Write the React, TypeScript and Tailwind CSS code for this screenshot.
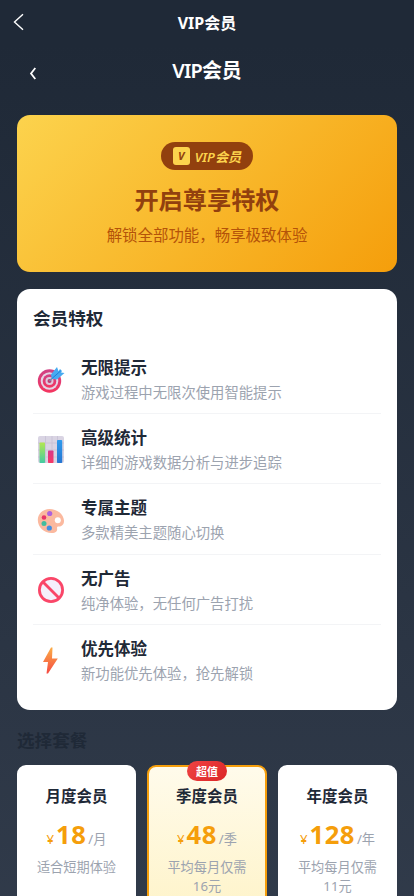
import React from "react";
import clsx from "clsx";

const TargetIcon = () => (
  <svg width="28" height="28" viewBox="0 0 28 28">
    <defs>
      <linearGradient id="ring" x1="0" y1="0" x2="0" y2="1">
        <stop offset="0" stopColor="#cf4286" />
        <stop offset="1" stopColor="#f5355f" />
      </linearGradient>
    </defs>
    <circle cx="12.5" cy="15" r="11.7" fill="url(#ring)" />
    <circle cx="12.5" cy="15" r="8.8" fill="#e5d5e6" />
    <circle cx="12.5" cy="15" r="6.8" fill="url(#ring)" />
    <circle cx="12.5" cy="15" r="4" fill="#ddc9dd" />
    <circle cx="12.5" cy="15" r="2" fill="#c13a70" />
    <path d="M12.5 15L18 9.5" stroke="#7d89a8" strokeWidth="1.6" />
    <path d="M14 8.5L20 1l1.5 4.3L23 3l2 2-1 1.5 3.5.5-7.5 6.5-5.2-.8z" fill="#47aaf0" />
    <path d="M15 12.5L23.5 5" stroke="#1d7fda" strokeWidth="1" />
  </svg>
);

const ChartIcon = () => (
  <svg width="28" height="28" viewBox="0 0 28 28">
    <defs>
      <linearGradient id="green" x1="0" y1="0" x2="0" y2="1">
        <stop offset="0" stopColor="#b3e750" />
        <stop offset="1" stopColor="#43cba3" />
      </linearGradient>
      <linearGradient id="pink" x1="0" y1="0" x2="0" y2="1">
        <stop offset="0" stopColor="#d8368a" />
        <stop offset="1" stopColor="#f83965" />
      </linearGradient>
      <linearGradient id="blue" x1="0" y1="0" x2="0" y2="1">
        <stop offset="0" stopColor="#2f9bed" />
        <stop offset="1" stopColor="#2475d2" />
      </linearGradient>
    </defs>
    <rect x="1" y="0" width="26" height="27" rx="2" fill="#d9d4e3" />
    <path
      d="M1 7h26M1 14h26M1 21h26M8.5 0v27M15 0v27M20.5 0v27"
      stroke="#c6c0d4"
      strokeWidth=".8"
    />
    <rect x="2.5" y="6.5" width="5.5" height="20.5" rx=".8" fill="url(#green)" />
    <rect x="11" y="14.5" width="5.5" height="12.5" rx=".8" fill="url(#pink)" />
    <rect x="20" y="4" width="5.2" height="23" rx=".8" fill="url(#blue)" />
  </svg>
);

const PaletteIcon = () => (
  <svg width="28" height="28" viewBox="0 0 28 28">
    <path
      d="M12.5 3C5.5 3 .8 8 .8 14c0 7 6.2 13 13.8 13 4.3 0 6-2 5.500-4.500-.3-1.700.3-2 2-2 3 0 5.100-2.500 4.900-6C26.600 8 20 3 12.500 3z"
      fill="#fbb99f"
    />
    <circle cx="20.8" cy="14.3" r="3" fill="#fff" />
    <circle cx="12.7" cy="7.5" r="2.6" fill="#ad61dc" />
    <circle cx="7" cy="11.5" r="2.3" fill="#e93467" />
    <circle cx="7" cy="17.5" r="2.5" fill="#41bd9f" />
    <circle cx="12.3" cy="22" r="2.6" fill="#438ee1" />
  </svg>
);

const BanIcon = () => (
  <svg width="28" height="28" viewBox="0 0 28 28">
    <circle cx="14" cy="14" r="11.6" fill="#f5f0fb" stroke="#fa4668" strokeWidth="2.8" />
    <path d="M6 6l16 16" stroke="#fa4668" strokeWidth="2.8" />
  </svg>
);

const BoltIcon = () => (
  <svg width="28" height="28" viewBox="0 0 28 28">
    <defs>
      <linearGradient id="bolt" x1="0" y1="0" x2="0" y2="1">
        <stop offset="0" stopColor="#fbad46" />
        <stop offset="1" stopColor="#f54a43" />
      </linearGradient>
    </defs>
    <path d="M14 .5h1.5L15 11.500h5.800L11 26.500H9.500L11 15H6z" fill="url(#bolt)" />
  </svg>
);

const features = [
  { icon: <TargetIcon />, title: "无限提示", desc: "游戏过程中无限次使用智能提示" },
  { icon: <ChartIcon />, title: "高级统计", desc: "详细的游戏数据分析与进步追踪" },
  { icon: <PaletteIcon />, title: "专属主题", desc: "多款精美主题随心切换" },
  { icon: <BanIcon />, title: "无广告", desc: "纯净体验，无任何广告打扰" },
  { icon: <BoltIcon />, title: "优先体验", desc: "新功能优先体验，抢先解锁" },
];

const plans = [
  { name: "月度会员", price: "18", unit: "/月", desc: "适合短期体验" },
  { name: "季度会员", price: "48", unit: "/季", desc: "平均每月仅需16元", tag: "超值" },
  { name: "年度会员", price: "128", unit: "/年", desc: "平均每月仅需11元" },
];

const App = () => {
  return (
    <div className="h-[896px] overflow-hidden bg-[#1f2937] font-['Noto_Sans','Noto_Sans_CJK_SC',sans-serif] text-[#1f2937]">
      <header className="grid h-11 grid-cols-[1fr_auto_1fr] items-center text-white">
        <svg className="ml-[13px]" width="11" height="18" viewBox="0 0 11 18">
          <path d="M10 1.2L1.5 9l8.5 7.8" fill="none" stroke="white" strokeWidth="1.4" />
        </svg>
        <h1 className="pt-[2px] text-[16px] leading-[22px] font-bold">VIP会员</h1>
      </header>

      <main className="h-[1180px] bg-linear-to-b from-[#1f2937] to-[#374151] px-[17px]">
        <div className="grid h-[71px] grid-cols-[1fr_auto_1fr] items-start pt-[13px] text-white">
          <svg className="mt-[10px] ml-[12px]" width="8" height="13" viewBox="0 0 8 13">
            <path d="M6.3 1L2 6.5 6.3 12" fill="none" stroke="white" strokeWidth="1.8" />
          </svg>
          <h2 className="text-[19.9px] leading-[28px] font-semibold">
            <span className="tracking-[-0.8px]">VIP</span>会员
          </h2>
        </div>

        <section className="flex h-[157px] flex-col items-center rounded-[13px] bg-linear-[135deg] from-[#fcd34d] to-[#f59e0b] pt-[27px]">
          <div className="flex h-7 items-center gap-[5px] rounded-full bg-[#92400e] px-3 text-[#fcd34d] italic">
            <span className="flex h-[18px] w-[17px] items-center justify-center rounded-[3px] bg-[#fcd34d] text-[11px] font-bold text-[#92400e]">
              V
            </span>
            <span className="pt-px text-[13.2px] leading-[18px] font-semibold">VIP会员</span>
          </div>
          <h2 className="mt-[13px] text-[24.2px] leading-[34px] font-semibold text-[#92400e]">
            开启尊享特权
          </h2>
          <p className="mt-[7px] text-[15.45px] leading-[22px] text-[#b45309]">
            解锁全部功能，畅享极致体验
          </p>
        </section>

        <section className="mt-[17px] h-[421px] rounded-[13px] bg-white px-4 pt-[17px]">
          <h3 className="text-[17.6px] leading-[25px] font-semibold">会员特权</h3>
          <ul className="mt-[13px]">
            {features.map((item) => (
              <li
                key={item.title}
                className="flex h-[70.2px] items-center gap-4 border-b border-[#f3f4f6] pt-[2px] last:border-0"
              >
                <span className="ml-1">{item.icon}</span>
                <div>
                  <h4 className="text-[16.5px] leading-[24px] font-semibold">{item.title}</h4>
                  <p className="mt-[3px] text-[14.35px] leading-[20px] text-[#9ca3af]">{item.desc}</p>
                </div>
              </li>
            ))}
          </ul>
        </section>

        <h3 className="mt-[18px] text-[17.6px] leading-[25px] font-semibold">选择套餐</h3>
        <div className="mt-3 grid grid-cols-[119px_120px_119px] gap-[11px]">
          {plans.map((plan) => (
            <div
              key={plan.name}
              className={clsx(
                "relative h-[160px] rounded-[9px] border-2 px-3 pt-[18px] text-center",
                plan.tag
                  ? "border-[#f59e0b] bg-linear-to-b from-[#fffbeb] to-[#fef3c7]"
                  : "border-white bg-white"
              )}
            >
              {plan.tag && (
                <span className="absolute -top-[6px] left-1/2 h-5 w-10 -translate-x-1/2 rounded-full bg-linear-[135deg] from-[#ef4444] to-[#dc2626] text-[11px] leading-[22px] font-semibold text-white">
                  {plan.tag}
                </span>
              )}
              <h4 className="text-[15.45px] leading-[22px] font-semibold">{plan.name}</h4>
              <div className="mt-[10px] flex items-baseline justify-center leading-[36px] whitespace-nowrap text-[#f59e0b]">
                <span className="text-[13.2px]">¥</span>
                <span className="ml-[2px] text-[25.6px] font-bold tracking-[0.5px]">{plan.price}</span>
                <span className="ml-[2px] text-[13.2px] text-[#9ca3af]">{plan.unit}</span>
              </div>
              <p className="mt-px text-[13.2px] leading-[19px] text-[#9ca3af]">{plan.desc}</p>
            </div>
          ))}
        </div>
      </main>
    </div>
  );
};

export default App;
